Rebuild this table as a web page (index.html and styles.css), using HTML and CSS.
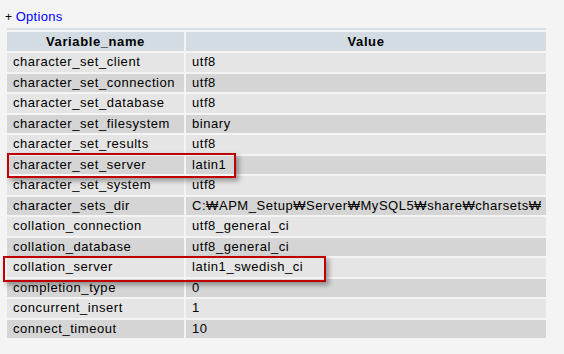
FILE: index.html
```html
<!DOCTYPE html>
<html>
<head>
<meta charset="utf-8">
<link rel="stylesheet" href="styles.css">
</head>
<body>
<div class="page">
  <div class="options"><span class="plus">+</span> <a class="opt-link">Options</a></div>
  <div class="topline"></div>
  <div class="vars">
    <div class="th">Variable_name</div><div class="th">Value</div>
    <div class="c odd">character_set_client</div><div class="c odd">utf8</div>
    <div class="c even">character_set_connection</div><div class="c even">utf8</div>
    <div class="c odd">character_set_database</div><div class="c odd">utf8</div>
    <div class="c even">character_set_filesystem</div><div class="c even">binary</div>
    <div class="c odd">character_set_results</div><div class="c odd">utf8</div>
    <div class="c even">character_set_server</div><div class="c even">latin1</div>
    <div class="c odd">character_set_system</div><div class="c odd">utf8</div>
    <div class="c even">character_sets_dir</div><div class="c even">C:₩APM_Setup₩Server₩MySQL5₩share₩charsets₩</div>
    <div class="c odd">collation_connection</div><div class="c odd">utf8_general_ci</div>
    <div class="c even">collation_database</div><div class="c even">utf8_general_ci</div>
    <div class="c odd">collation_server</div><div class="c odd">latin1_swedish_ci</div>
    <div class="c even">completion_type</div><div class="c even">0</div>
    <div class="c odd">concurrent_insert</div><div class="c odd">1</div>
    <div class="c even">connect_timeout</div><div class="c even">10</div>
  </div>
  <div class="mark mark-1"></div>
  <div class="mark mark-2"></div>
</div>
</body>
</html>
```

FILE: styles.css
```css
html, body {
  margin: 0;
  padding: 0;
  background: #f4f4f4;
}
body {
  font-family: "Liberation Sans", Arial, sans-serif;
  font-size: 13px;
  color: #000;
}
.page {
  position: relative;
  width: 564px;
  height: 354px;
  padding: 9px 0 0 7px;
  box-sizing: border-box;
}
.options {
  height: 16px;
  line-height: 16px;
  margin-left: -2px;
  margin-bottom: 3px;
}
.plus {
  font-size: 12px;
}
.opt-link {
  color: #0000ff;
  letter-spacing: 0.3px;
}
.topline {
  width: 539px;
  height: 2px;
  background: #d7e0e6;
  margin-bottom: 2px;
}
.vars {
  display: grid;
  grid-template-columns: 177px 360px;
  grid-template-rows: 19px repeat(14, 18.5px);
  gap: 2px;
}
.th {
  background: #d3dce3;
  font-weight: bold;
  text-align: center;
  line-height: 19px;
  letter-spacing: 0.6px;
}
.c {
  padding-left: 6px;
  line-height: 18.5px;
  letter-spacing: 0.55px;
  white-space: nowrap;
  overflow: hidden;
}
.odd { background: #e5e5e5; }
.even { background: #d5d5d5; }
.mark {
  position: absolute;
  border: 2px solid #c00000;
  box-shadow: 3px 3px 5px rgba(0,0,0,0.35);
  box-sizing: border-box;
}
.mark-1 {
  left: 7px;
  top: 153px;
  width: 229px;
  height: 25px;
}
.mark-2 {
  left: 3px;
  top: 256px;
  width: 323px;
  height: 26px;
}
```
